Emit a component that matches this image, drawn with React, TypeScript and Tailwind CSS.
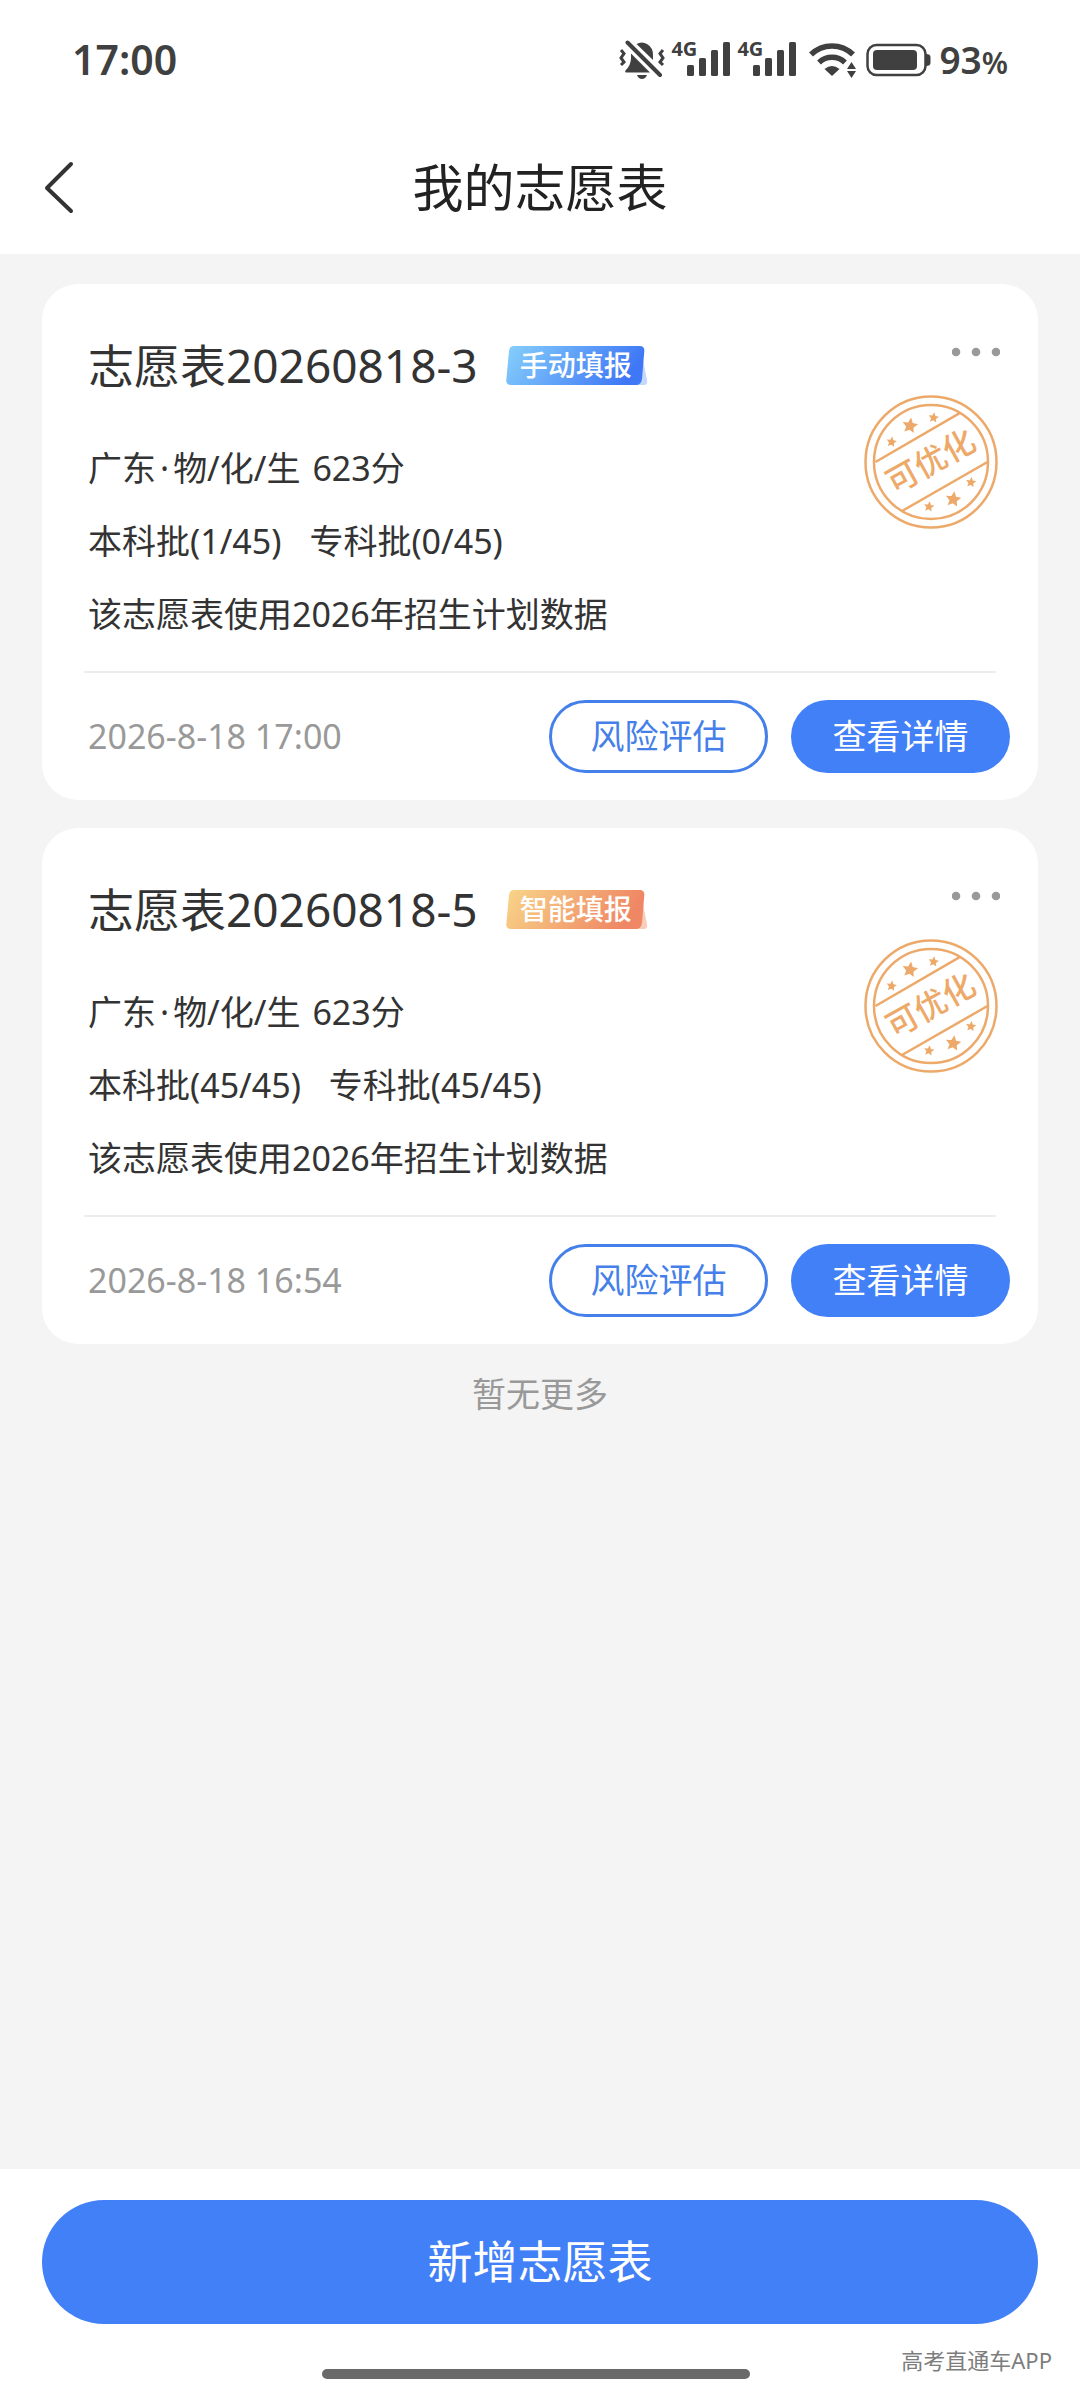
import React from "react";

type Tone = "manual" | "smart";

interface Plan {
  name: string;
  tag: string;
  tone: Tone;
  province: string;
  subject: string;
  score: string;
  undergraduate: string;
  college: string;
  note: string;
  time: string;
}

const plans: Plan[] = [
  {
    name: "志愿表20260818-3",
    tag: "手动填报",
    tone: "manual",
    province: "广东",
    subject: "物/化/生",
    score: "623分",
    undergraduate: "本科批(1/45)",
    college: "专科批(0/45)",
    note: "该志愿表使用2026年招生计划数据",
    time: "2026-8-18 17:00",
  },
  {
    name: "志愿表20260818-5",
    tag: "智能填报",
    tone: "smart",
    province: "广东",
    subject: "物/化/生",
    score: "623分",
    undergraduate: "本科批(45/45)",
    college: "专科批(45/45)",
    note: "该志愿表使用2026年招生计划数据",
    time: "2026-8-18 16:54",
  },
];

const tones: Record<Tone, { from: string; to: string; tail: string }> = {
  manual: { from: "#86cffb", to: "#3f78f6", tail: "#c3d8fb" },
  smart: { from: "#f8d588", to: "#ef8664", tail: "#f9cdbb" },
};

function MutedBell() {
  return (
    <svg width="46" height="40" viewBox="0 0 46 40" fill="#404040" aria-label="静音">
      <path d="M12 13.5 L31 32.5 L7 32.5 Q5.500 32.500 6.500 30.500 Q12 25 12 18 Z" />
      <path d="M17.500 4 Q23 1 28 4 Q34 7.500 34 15 L34 20 Z" />
      <path d="M18 35 L28 35 Q26.500 39 23 39 Q19.500 39 18 35 Z" />
      <path d="M8.500 2.500 L41 35" stroke="#404040" strokeWidth="4" strokeLinecap="round" />
      <path
        d="M2 10 L5 13.500 L2 18 L5 22 L2 25 M44 10 L41 13.500 L44 18 L41 22 L44 25"
        fill="none"
        stroke="#404040"
        strokeWidth="3"
      />
    </svg>
  );
}

function Signal() {
  return (
    <div className="relative flex h-10 w-[60px] items-end justify-end">
      <span className="absolute top-0 left-0 text-[20px] leading-[17px] font-bold">4G</span>
      <svg width="44" height="38" viewBox="0 0 44 38" fill="#404040" aria-hidden="true">
        <rect x="0" y="23" width="7" height="11" rx="1.500" />
        <rect x="12" y="16" width="7" height="18" rx="1.500" />
        <rect x="24" y="8" width="7" height="26" rx="1.500" />
        <rect x="36" y="0" width="7" height="34" rx="1.500" />
      </svg>
    </div>
  );
}

function Wifi() {
  return (
    <svg width="48" height="36" viewBox="0 0 48 36" fill="none" stroke="#404040" aria-label="Wi-Fi">
      <path d="M2 12.500 A30 30 0 0 1 44 12.500" strokeWidth="5.500" />
      <path d="M10 20.500 A19 19 0 0 1 36 20.500" strokeWidth="5.500" />
      <path d="M15.500 27 Q23 21 30.500 27 L23 34 Z" fill="#404040" stroke="none" />
      <path d="M42.500 20 L47 27 L38 27 Z M42.500 36 L47 29 L38 29 Z" fill="#404040" stroke="none" />
    </svg>
  );
}

function Battery() {
  return (
    <svg width="66" height="34" viewBox="0 0 66 34" aria-label="电量">
      <rect x="1.500" y="2" width="58" height="30" rx="9" fill="none" stroke="#404040" strokeWidth="2.500" />
      <rect x="7" y="7" width="44" height="20" rx="4" fill="#404040" />
      <path d="M60 11 Q64.500 11 64.500 14 L64.500 20 Q64.500 23 60 23 Z" fill="#404040" />
    </svg>
  );
}

function Tag({ label, tone }: { label: string; tone: Tone }) {
  const c = tones[tone];
  return (
    <span className="relative flex h-[39px] w-[142px] shrink-0 items-center pl-[14px] text-[28px] leading-[39px] font-medium text-white">
      <svg className="absolute inset-0" width="142" height="39" viewBox="0 0 142 39" aria-hidden="true">
        <defs>
          <linearGradient id={tone} x1="0" y1="0" x2="1" y2="0.2">
            <stop offset="0" stopColor={c.from} />
            <stop offset="1" stopColor={c.to} />
          </linearGradient>
        </defs>
        <path d="M137 14 L141 34 Q142 39 138 39 L124 39 Z" fill={c.tail} />
        <path
          d="M8 0 L134 0 Q138.500 0 138.300 5 L136 33 Q135 39 130 39 L5 39 Q0 39 0.300 34 L3 5 Q3.500 0 8 0 Z"
          fill={`url(#${tone})`}
        />
      </svg>
      <span className="relative">{label}</span>
    </span>
  );
}

const star = "M0 -8 L2.300 -2.900 L7.600 -2.500 L3.600 1.400 L4.700 6.500 L0 3.900 L-4.700 6.500 L-3.600 1.400 L-7.600 -2.500 L-2.300 -2.900 Z";
const stars = [
  [28.6, 48, 0.68],
  [47, 31.7, 1.02],
  [70.6, 23.7, 0.68],
  [66, 112.7, 0.68],
  [90.3, 105.3, 1.02],
  [108, 88.3, 0.68],
];

function Stamp() {
  return (
    <svg
      className="absolute top-[110px] right-[39px]"
      width="136"
      height="136"
      viewBox="0 0 136 136"
      fill="none"
      stroke="#eda969"
      strokeWidth="2.500"
    >
      <circle cx="68" cy="68" r="65.500" />
      <circle cx="68" cy="68" r="57" />
      <path d="M12.500 68 L97.500 18.700 M39 117 L124.500 68" />
      <g fill="#eda969" stroke="none">
        {stars.map(([x, y, s]) => (
          <path key={x} d={star} transform={`translate(${x} ${y}) rotate(8) scale(${s})`} />
        ))}
        <text
          x="67"
          y="79"
          fontSize="32"
          fontWeight="500"
          textAnchor="middle"
          transform="rotate(-29 67 66)"
        >
          可优化
        </text>
      </g>
    </svg>
  );
}

function PlanCard({ plan }: { plan: Plan }) {
  return (
    <article className="relative rounded-[36px] bg-white pt-9 pb-[27px] text-[34px] text-[#333333]">
      <div className="flex h-[90px] items-center pl-[46px]">
        <h2 className="text-[46px] leading-[60px]">{plan.name}</h2>
        <div className="ml-7">
          <Tag label={plan.tag} tone={plan.tone} />
        </div>
        <button type="button" aria-label="更多" className="mr-[34px] ml-auto self-start px-1 pt-5 pb-5">
          <svg width="48" height="24" viewBox="0 0 48 24" fill="#999999">
            <circle cx="4" cy="12" r="4.300" />
            <circle cx="24" cy="12" r="4.300" />
            <circle cx="44" cy="12" r="4.300" />
          </svg>
        </button>
      </div>
      <Stamp />
      <div className="mt-[22px] pl-[46px] leading-[73px]">
        <p>
          {plan.province}
          <span className="mx-1">·</span>
          {plan.subject}
          <span className="ml-3">{plan.score}</span>
        </p>
        <p className="flex gap-7">
          <span>{plan.undergraduate}</span>
          <span>{plan.college}</span>
        </p>
        <p>{plan.note}</p>
      </div>
      <hr className="mx-[42px] mt-5 mb-[27px] border-t-2 border-[#ededed]" />
      <div className="flex items-center gap-[23px] pr-7 pl-[46px]">
        <time className="mr-auto text-[#999999]">{plan.time}</time>
        <button
          type="button"
          className="h-[73px] w-[219px] rounded-full border-3 border-[#4580ea] text-[#4580ea]"
        >
          风险评估
        </button>
        <button type="button" className="h-[73px] w-[219px] rounded-full bg-[#4280f8] text-white">
          查看详情
        </button>
      </div>
    </article>
  );
}

export default function App() {
  return (
    <div className="flex min-h-screen flex-col bg-[#f4f4f4] font-['Noto_Sans','Noto_Sans_CJK_SC',sans-serif]">
      <div className="flex h-[120px] items-center bg-white pr-[72px] pl-[72px] text-[#404040]">
        <span className="mr-auto text-[41px] font-semibold">17:00</span>
        <div className="flex items-center">
          <MutedBell />
          <div className="ml-[6px] flex gap-[6px]">
            <Signal />
            <Signal />
          </div>
          <div className="ml-3 flex items-center gap-[9px]">
            <Wifi />
            <Battery />
          </div>
          <span className="ml-[7px] text-[37px] font-semibold">
            93<span className="text-[30px]">%</span>
          </span>
        </div>
      </div>
      <header className="grid h-[134px] grid-cols-[1fr_auto_1fr] items-center bg-white px-10">
        <button type="button" aria-label="返回" className="justify-self-start">
          <svg width="38" height="54" viewBox="0 0 38 54" fill="none" stroke="#333333" strokeWidth="4" strokeLinecap="round" strokeLinejoin="round">
            <path d="M31 4 L7 28 L31 51" />
          </svg>
        </button>
        <h1 className="text-[51px] text-[#222222]">我的志愿表</h1>
      </header>
      <main className="flex flex-1 flex-col gap-7 px-[42px] pt-[30px]">
        {plans.map((plan) => (
          <PlanCard key={plan.name} plan={plan} />
        ))}
        <p className="text-center text-[34px] leading-[44px] text-[#999999]">暂无更多</p>
      </main>
      <footer className="bg-white px-[42px] pt-[31px]">
        <button type="button" className="h-[124px] w-full rounded-full bg-[#4280f8] text-[45px] text-white">
          新增志愿表
        </button>
        <div className="relative flex h-[76px] justify-center pt-[45px] pr-2">
          <div className="h-[10px] w-[428px] rounded-full bg-[#6a6a6a]" />
          <span className="absolute top-5 -right-[14px] text-[22px] leading-8 text-[#7d7d7d]">高考直通车APP</span>
        </div>
      </footer>
    </div>
  );
}
